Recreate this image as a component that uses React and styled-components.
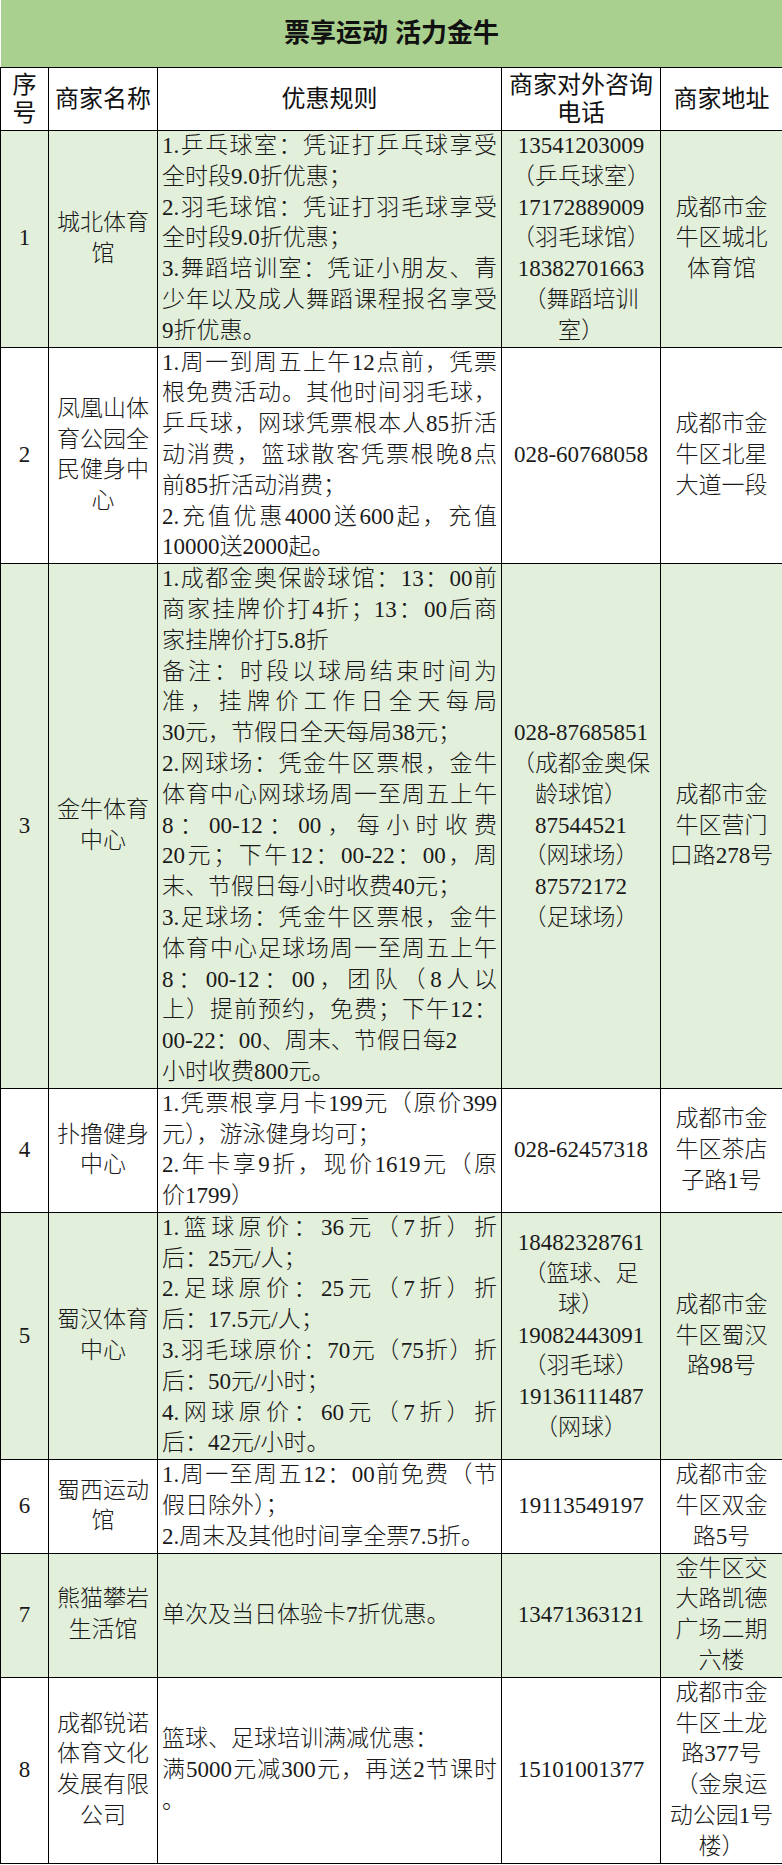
import styled, { createGlobalStyle } from "styled-components";

const GlobalStyle = createGlobalStyle`
  html, body {
    margin: 0;
    padding: 0;
    background: #fff;
  }
`;

const Sheet = styled.table`
  width: 782px;
  table-layout: fixed;
  border-collapse: collapse;
  font-family: "Liberation Serif", "Noto Sans CJK SC", serif;
  font-size: 23px;
  line-height: 30.8px;
  color: #1a1a1a;
`;

const TitleCell = styled.th`
  height: 67px;
  padding: 0;
  background: #a9d08e;
  border-bottom: 1px solid #000;
  font-family: "Liberation Sans", "Noto Sans CJK SC", sans-serif;
  font-size: 26px;
  font-weight: 700;
  color: #111;
  text-align: center;
  vertical-align: middle;
`;

const HeadCell = styled.th`
  height: 62px;
  padding: 0 2px;
  border: 1px solid #000;
  background: #fff;
  font-family: "Liberation Sans", "Noto Sans CJK SC", sans-serif;
  font-size: 24px;
  font-weight: 400;
  line-height: 28px;
  color: #111;
  text-align: center;
  vertical-align: middle;
`;

const Row = styled.tr`
  background: ${(p) => (p.$tint ? "#e2efda" : "#fff")};
`;

const Cell = styled.td`
  padding: 0 ${(p) => (p.$kind === "rule" ? "4px" : "2px")};
  border: 1px solid #000;
  vertical-align: middle;
  text-align: ${(p) => (p.$kind === "rule" ? "left" : "center")};
  font-weight: 300;
  overflow: hidden;
`;

const Line = styled.span`
  display: block;
  white-space: nowrap;
  text-align: ${(p) => (p.$justify ? "justify" : "inherit")};
  text-align-last: ${(p) => (p.$justify ? "justify" : "auto")};
  text-justify: inter-character;
`;

const rows = [
  {
    no: 1,
    tint: true,
    name: ["城北体育", "馆"],
    rules: [
      ["1.乒乓球室：凭证打乒乓球享受", "全时段9.0折优惠；"],
      ["2.羽毛球馆：凭证打羽毛球享受", "全时段9.0折优惠；"],
      ["3.舞蹈培训室：凭证小朋友、青", "少年以及成人舞蹈课程报名享受", "9折优惠。"],
    ],
    phone: ["13541203009", "（乒乓球室）", "17172889009", "（羽毛球馆）", "18382701663", "（舞蹈培训", "室）"],
    addr: ["成都市金", "牛区城北", "体育馆"],
  },
  {
    no: 2,
    name: ["凤凰山体", "育公园全", "民健身中", "心"],
    rules: [
      [
        "1.周一到周五上午12点前，凭票",
        "根免费活动。其他时间羽毛球，",
        "乒乓球，网球凭票根本人85折活",
        "动消费，篮球散客凭票根晚8点",
        "前85折活动消费；",
      ],
      ["2.充值优惠4000送600起，充值", "10000送2000起。"],
    ],
    phone: ["028-60768058"],
    addr: ["成都市金", "牛区北星", "大道一段"],
  },
  {
    no: 3,
    tint: true,
    name: ["金牛体育", "中心"],
    rules: [
      ["1.成都金奥保龄球馆：13：00前", "商家挂牌价打4折；13：00后商", "家挂牌价打5.8折"],
      ["备注：时段以球局结束时间为", "准，挂牌价工作日全天每局", "30元，节假日全天每局38元；"],
      [
        "2.网球场：凭金牛区票根，金牛",
        "体育中心网球场周一至周五上午",
        "8：00-12：00，每小时收费",
        "20元；下午12：00-22：00，周",
        "末、节假日每小时收费40元；",
      ],
      [
        "3.足球场：凭金牛区票根，金牛",
        "体育中心足球场周一至周五上午",
        "8：00-12：00，团队（8人以",
        "上）提前预约，免费；下午12：",
        "00-22：00、周末、节假日每2",
      ],
      ["小时收费800元。"],
    ],
    phone: ["028-87685851", "（成都金奥保", "龄球馆）", "87544521", "（网球场）", "87572172", "（足球场）"],
    addr: ["成都市金", "牛区营门", "口路278号"],
  },
  {
    no: 4,
    name: ["扑撸健身", "中心"],
    rules: [
      ["1.凭票根享月卡199元（原价399", "元），游泳健身均可；"],
      ["2.年卡享9折，现价1619元（原", "价1799）"],
    ],
    phone: ["028-62457318"],
    addr: ["成都市金", "牛区茶店", "子路1号"],
  },
  {
    no: 5,
    tint: true,
    name: ["蜀汉体育", "中心"],
    rules: [
      ["1.篮球原价：36元（7折）折", "后：25元/人；"],
      ["2.足球原价：25元（7折）折", "后：17.5元/人；"],
      ["3.羽毛球原价：70元（75折）折", "后：50元/小时；"],
      ["4.网球原价：60元（7折）折", "后：42元/小时。"],
    ],
    phone: ["18482328761", "（篮球、足", "球）", "19082443091", "（羽毛球）", "19136111487", "（网球）"],
    addr: ["成都市金", "牛区蜀汉", "路98号"],
  },
  {
    no: 6,
    name: ["蜀西运动", "馆"],
    rules: [["1.周一至周五12：00前免费（节", "假日除外）；"], ["2.周末及其他时间享全票7.5折。"]],
    phone: ["19113549197"],
    addr: ["成都市金", "牛区双金", "路5号"],
  },
  {
    no: 7,
    tint: true,
    name: ["熊猫攀岩", "生活馆"],
    rules: [["单次及当日体验卡7折优惠。"]],
    phone: ["13471363121"],
    addr: ["金牛区交", "大路凯德", "广场二期", "六楼"],
  },
  {
    no: 8,
    name: ["成都锐诺", "体育文化", "发展有限", "公司"],
    rules: [["篮球、足球培训满减优惠："], ["满5000元减300元，再送2节课时", "。"]],
    phone: ["15101001377"],
    addr: ["成都市金", "牛区土龙", "路377号", "（金泉运", "动公园1号", "楼）"],
  },
];

function Lines({ items }) {
  return items.map((t, i) => <Line key={i}>{t}</Line>);
}

function Rules({ paragraphs }) {
  return paragraphs.map((para, pi) =>
    para.map((t, i) => (
      <Line key={pi + "-" + i} $justify={i < para.length - 1}>
        {t}
      </Line>
    ))
  );
}

export default function App() {
  return (
    <>
      <GlobalStyle />
      <Sheet>
        <colgroup>
          <col style={{ width: 48 }} />
          <col style={{ width: 109 }} />
          <col style={{ width: 344 }} />
          <col style={{ width: 159 }} />
          <col style={{ width: 122 }} />
        </colgroup>
        <thead>
          <tr>
            <TitleCell colSpan={5}>票享运动 活力金牛</TitleCell>
          </tr>
          <tr>
            <HeadCell>
              序<br />号
            </HeadCell>
            <HeadCell>商家名称</HeadCell>
            <HeadCell>优惠规则</HeadCell>
            <HeadCell>
              商家对外咨询
              <br />
              电话
            </HeadCell>
            <HeadCell>商家地址</HeadCell>
          </tr>
        </thead>
        <tbody>
          {rows.map((r) => (
            <Row key={r.no} $tint={r.tint}>
              <Cell $kind="no">{r.no}</Cell>
              <Cell $kind="name">
                <Lines items={r.name} />
              </Cell>
              <Cell $kind="rule">
                <Rules paragraphs={r.rules} />
              </Cell>
              <Cell $kind="phone">
                <Lines items={r.phone} />
              </Cell>
              <Cell $kind="addr">
                <Lines items={r.addr} />
              </Cell>
            </Row>
          ))}
        </tbody>
      </Sheet>
    </>
  );
}
